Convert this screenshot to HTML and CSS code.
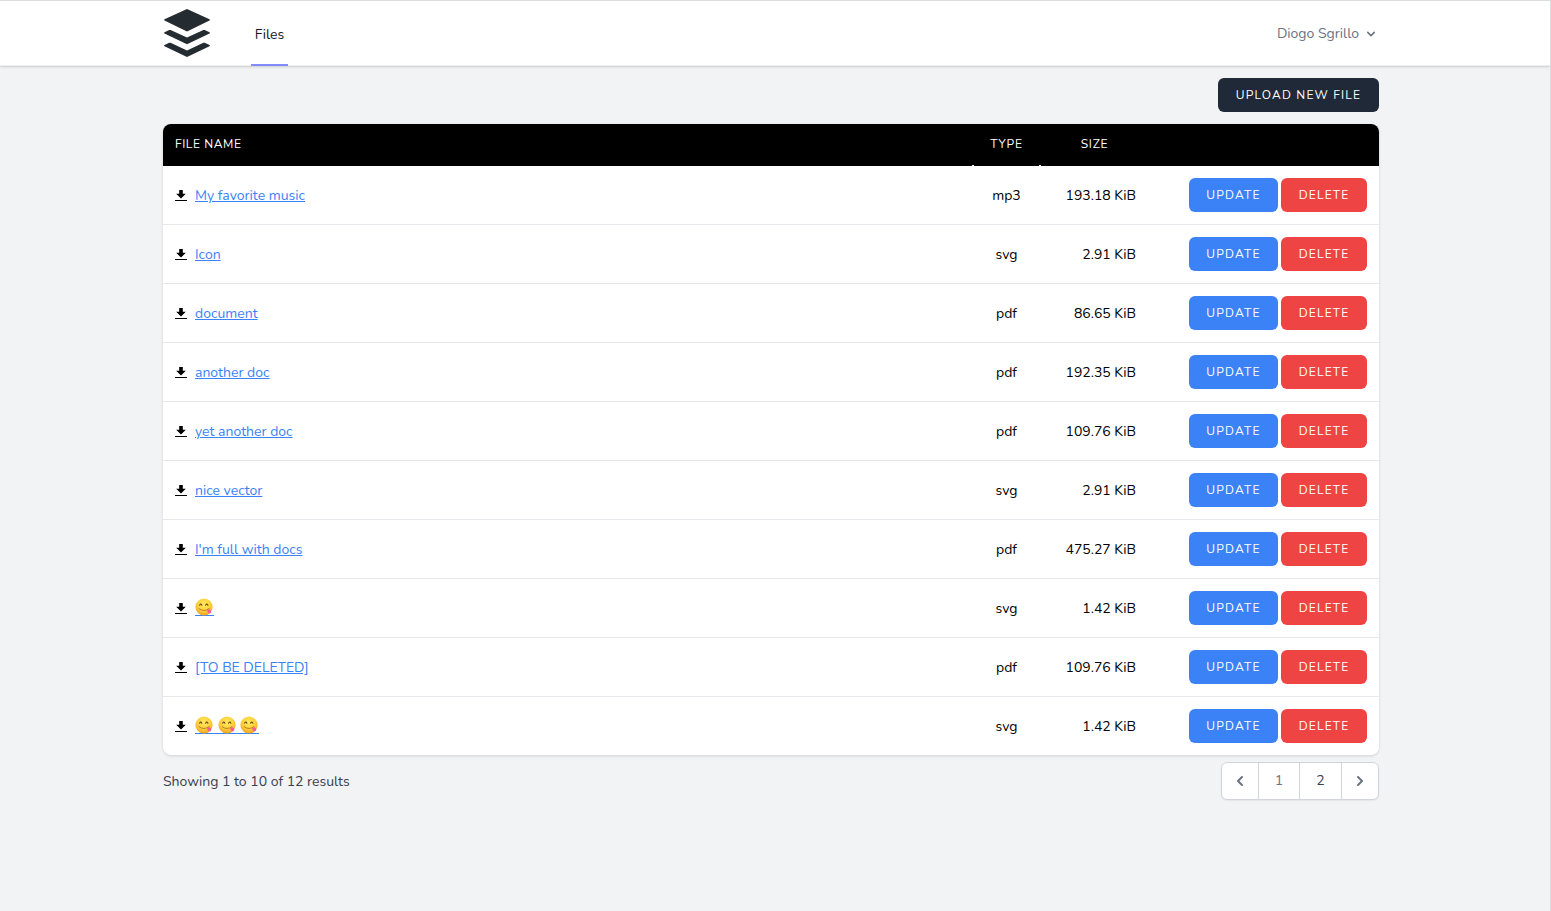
FILE: index.html
```html
<!DOCTYPE html>
<html lang="en">
<head>
<meta charset="utf-8">
<title>Files</title>
<link rel="stylesheet" href="styles.css">
</head>
<body>
<svg class="defs" width="0" height="0" aria-hidden="true">
  <defs>
    <radialGradient id="face" cx="50%" cy="35%" r="65%">
      <stop offset="0" stop-color="#ffec62"/><stop offset=".6" stop-color="#fdcf3a"/><stop offset="1" stop-color="#ee9f24"/>
    </radialGradient>
    <symbol id="yum" viewBox="0 0 18 18">
      <circle cx="9" cy="9" r="8.6" fill="url(#face)"/>
      <path d="M4.6 7.200Q5.800 5 6.900 7.200M10.600 7.200Q11.700 5 12.900 7.200" fill="none" stroke="#7a4a12" stroke-width="1.100" stroke-linecap="round"/>
      <path d="M4 10.600Q9 14.600 14 10.600" fill="none" stroke="#b8741f" stroke-width=".9" stroke-linecap="round"/>
      <path d="M12 12.600l2.200-1.600q2.600 1.500 2 3.600-1.500 1.500-3.200.2z" fill="#fb5a9c"/>
    </symbol>
    <symbol id="download" viewBox="0 0 12 12">
      <path d="M4.200 0h3.600v3.800h3L6 8.600 1.200 3.800h3zM0 9.900h12v1.100H0z"/>
    </symbol>
  </defs>
</svg>
<header class="nav">
  <div class="wrap nav-inner">
    <svg class="logo" viewBox="0 0 46 48" fill="#242b31"><path d="M23 0 45.500 10.200Q46.300 11 45.500 11.600L23 22.400.5 11.600Q-.3 11 .5 10.200zM5.300 21Q6 20.800 6.600 21.100L23 28.600 39.400 21.100Q40 20.800 40.700 21.100L45.500 23.300Q46.300 24 45.500 24.600L23 35.200.5 24.600Q-.3 24 .5 23.300zM5.300 33.800Q6 33.500 6.600 33.800L23 41.400 39.400 33.800Q40 33.500 40.700 33.800L45.500 36Q46.300 36.700 45.500 37.300L23 48 .5 37.300Q-.3 36.700 .5 36z"/></svg>
    <a class="tab">Files</a>
    <div class="user"><span class="user-name">Diogo Sgrillo</span><svg width="16" height="16" viewBox="0 0 20 20" fill="#6b7280"><path d="M5.293 7.293a1 1 0 011.414 0L10 10.586l3.293-3.293a1 1 0 111.414 1.414l-4 4a1 1 0 01-1.414 0l-4-4a1 1 0 010-1.414z"/></svg></div>
  </div>
</header>
<main class="wrap">
  <div class="actions"><button class="btn upload">Upload new file</button></div>
  <section class="table">
    <div class="row head"><div>File name</div><div class="type notch">Type</div><div class="size">Size</div><div></div></div>
    <div class="row"><div class="name"><svg class="dl"><use href="#download"/></svg><a>My favorite music</a></div><div class="type">mp3</div><div class="size">193.18 KiB</div><div class="ops"><button class="btn update">Update</button><button class="btn delete">Delete</button></div></div>
    <div class="row"><div class="name"><svg class="dl"><use href="#download"/></svg><a>Icon</a></div><div class="type">svg</div><div class="size">2.91 KiB</div><div class="ops"><button class="btn update">Update</button><button class="btn delete">Delete</button></div></div>
    <div class="row"><div class="name"><svg class="dl"><use href="#download"/></svg><a>document</a></div><div class="type">pdf</div><div class="size">86.65 KiB</div><div class="ops"><button class="btn update">Update</button><button class="btn delete">Delete</button></div></div>
    <div class="row"><div class="name"><svg class="dl"><use href="#download"/></svg><a>another doc</a></div><div class="type">pdf</div><div class="size">192.35 KiB</div><div class="ops"><button class="btn update">Update</button><button class="btn delete">Delete</button></div></div>
    <div class="row"><div class="name"><svg class="dl"><use href="#download"/></svg><a>yet another doc</a></div><div class="type">pdf</div><div class="size">109.76 KiB</div><div class="ops"><button class="btn update">Update</button><button class="btn delete">Delete</button></div></div>
    <div class="row"><div class="name"><svg class="dl"><use href="#download"/></svg><a>nice vector</a></div><div class="type">svg</div><div class="size">2.91 KiB</div><div class="ops"><button class="btn update">Update</button><button class="btn delete">Delete</button></div></div>
    <div class="row"><div class="name"><svg class="dl"><use href="#download"/></svg><a>I'm full with docs</a></div><div class="type">pdf</div><div class="size">475.27 KiB</div><div class="ops"><button class="btn update">Update</button><button class="btn delete">Delete</button></div></div>
    <div class="row"><div class="name"><svg class="dl"><use href="#download"/></svg><a class="emoji"><svg><use href="#yum"/></svg></a></div><div class="type">svg</div><div class="size">1.42 KiB</div><div class="ops"><button class="btn update">Update</button><button class="btn delete">Delete</button></div></div>
    <div class="row"><div class="name"><svg class="dl"><use href="#download"/></svg><a>[TO BE DELETED]</a></div><div class="type">pdf</div><div class="size">109.76 KiB</div><div class="ops"><button class="btn update">Update</button><button class="btn delete">Delete</button></div></div>
    <div class="row"><div class="name"><svg class="dl"><use href="#download"/></svg><a class="emoji"><svg><use href="#yum"/></svg><svg><use href="#yum"/></svg><svg><use href="#yum"/></svg></a></div><div class="type">svg</div><div class="size">1.42 KiB</div><div class="ops"><button class="btn update">Update</button><button class="btn delete">Delete</button></div></div>
  </section>
  <footer class="foot">
    <p class="summary">Showing 1 to 10 of 12 results</p>
    <nav class="pager">
      <a><svg width="20" height="20" viewBox="0 0 20 20"><path d="M12.707 5.293a1 1 0 010 1.414L9.414 10l3.293 3.293a1 1 0 01-1.414 1.414l-4-4a1 1 0 010-1.414l4-4a1 1 0 011.414 0z"/></svg></a>
      <a class="current">1</a>
      <a>2</a>
      <a><svg width="20" height="20" viewBox="0 0 20 20"><path d="M7.293 14.707a1 1 0 010-1.414L10.586 10 7.293 6.707a1 1 0 011.414-1.414l4 4a1 1 0 010 1.414l-4 4a1 1 0 01-1.414 0z"/></svg></a>
    </nav>
  </footer>
</main>
</body>
</html>
```
FILE: styles.css
```css
* { box-sizing: border-box; margin: 0; }
body {
  height: 911px;
  overflow: hidden;
  background: #f2f3f5;
  border-top: 1px solid #dcdddf;
  border-right: 1px solid #dcdddf;
  font: 14px/20px Nunito, Lato, "Open Sans", sans-serif;
  color: #000;
}
.defs { position: absolute; }
.wrap { width: 1216px; margin-left: 163px; }
.nav { height: 65px; background: #fff; border-bottom: 1px solid #eceef1; box-shadow: 0 1px 3px rgba(0,0,0,.12), 0 1px 1px rgba(0,0,0,.04); }
.nav-inner { display: flex; height: 65px; }
.logo { width: 46px; height: 48px; margin: 8px 0 0 1px; }
.tab { margin-left: 41px; width: 37px; text-align: center; padding-top: 24px; border-bottom: 2px solid #818cf8; color: #111827; }
.user { margin-left: auto; display: flex; align-items: center; color: #6b7280; gap: 4px; }
.actions { display: flex; justify-content: flex-end; padding: 12px 0; }
.btn { height: 34px; border: 0; border-radius: 6px; padding: 0; color: #fff; font: inherit; font-size: 12px; text-transform: uppercase; letter-spacing: 1.2px; text-align: center; }
.upload { width: 161px; background: #1f2937; }
.update { width: 89px; background: #3b82f6; }
.delete { width: 86px; background: #ef4444; }
.table { background: #fff; border-radius: 8px; overflow: hidden; box-shadow: 0 1px 3px rgba(0,0,0,.14); }
.row { display: grid; grid-template-columns: 809px 69px 107px 231px; align-items: center; height: 59px; border-bottom: 1px solid #e5e7eb; }
.row:last-child { height: 58px; border-bottom: 0; }
.row > div { padding: 0 12px; }
.row.head { height: 42px; background: #000; color: #fff; font-size: 12px; text-transform: uppercase; letter-spacing: .6px; border: 0; align-items: stretch; line-height: 40px; }
.row > .type { text-align: center; padding: 2px 0 0; }
.row > .size { text-align: right; padding-top: 2px; }
.head > .type, .head > .size { letter-spacing: .8px; }
.row.head > .type, .row.head > .size { padding-top: 0; }
.row.head > .size { text-align: center; }
.notch { background: linear-gradient(#fff, #fff) 0 100% / 2px 1px no-repeat, linear-gradient(#fff, #fff) 100% 100% / 2px 1px no-repeat; }
.ops { display: flex; justify-content: flex-end; gap: 3px; }
.name { display: flex; align-items: center; gap: 8px; }
.name a { margin-top: 2px; color: #3b82f6; text-decoration: underline; }
.dl { width: 12px; height: 12px; position: relative; top: 1px; }
.name .emoji { display: flex; gap: 4.500px; border-bottom: 1px solid #3b82f6; padding-right: 1px; margin-top: -3px; }
.emoji svg { width: 18px; height: 18px; margin-bottom: -1px; }
.foot { display: flex; justify-content: space-between; padding-top: 7px; color: #374151; }
.summary { padding-top: 10px; }
.pager { display: flex; width: 158px; height: 38px; background: #fff; border: 1px solid #d1d5db; border-radius: 6px; box-shadow: 0 1px 2px rgba(0,0,0,.06); }
.pager a { width: 41px; display: flex; align-items: center; justify-content: center; border-right: 1px solid #d1d5db; }
.pager a:first-child { width: 37px; }
.pager a:nth-child(3) { width: 42px; }
.pager a:last-child { width: 36px; border: 0; }
.pager .current { color: #6b7280; }
.pager svg { fill: #6b7280; }
```
